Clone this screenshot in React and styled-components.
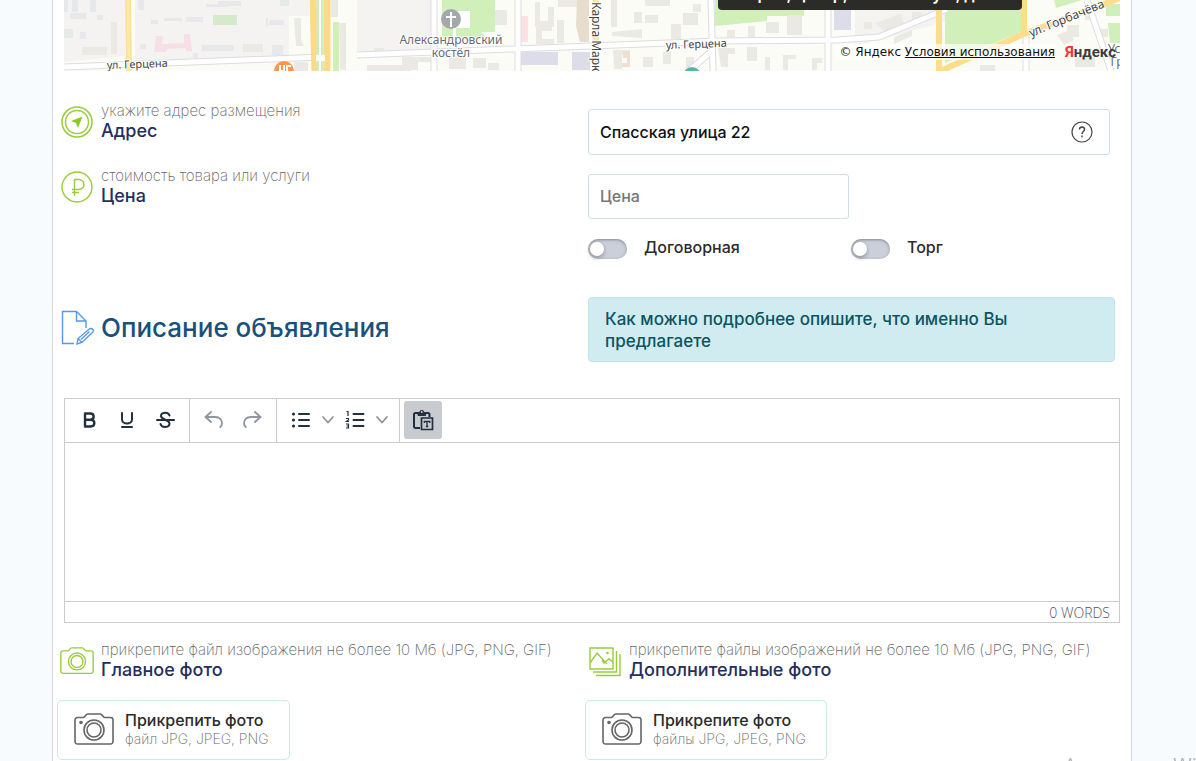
import React from 'react'
import { styled, createGlobalStyle } from "styled-components";

const GlobalStyle = createGlobalStyle`
  * {
    box-sizing: border-box;
  }
  body {
    margin: 0;
    min-height: 100vh;
    background: #f7fbfd;
    font-family: Inter, "Open Sans", sans-serif;
    color: #2b2b2b;
    overflow: hidden;
  }
`;

const Page = styled.div`
  display: flex;
  justify-content: center;
  padding: 0 64px 0 52px;
`;

const Panel = styled.main`
  width: 100%;
  max-width: 1080px;
  min-height: 100vh;
  padding: 0 11px;
  background: #fff;
  border-left: 1px solid #cfdfe5;
  border-right: 1px solid #cfdfe5;
`;

const MapBox = styled.div`
  position: relative;
  height: 71px;
  overflow: hidden;
  > svg {
    display: block;
    width: 100%;
    height: 100%;
  }
`;
const Balloon = styled.div`
  position: absolute;
  left: 654px;
  bottom: 61px;
  width: 304px;
  padding: 8px 0 6px;
  border-radius: 0 0 4px 4px;
  background: #2b2c27;
  color: #fff;
  font-size: 16px;
  font-weight: 600;
  line-height: 20px;
  text-align: center;
`;
const Copyright = styled.div`
  position: absolute;
  right: 64px;
  bottom: 11px;
  padding: 0 1px 0 4px;
  background: rgba(255, 255, 255, 0.7);
  color: #111;
  font-family: "DejaVu Sans", sans-serif;
  font-size: 12px;
  line-height: 16px;
  a {
    color: #111;
  }
`;
const YandexLogo = styled.a`
  position: absolute;
  right: 4px;
  bottom: 10px;
  color: #3c3c3c;
  font: bold 15px/18px Roboto, sans-serif;
  text-decoration: none;
  span {
    color: #f33;
  }
`;

const Row = styled.div`
  display: grid;
  grid-template-columns: 1fr 1fr;
  margin: ${({ $top }) => $top || 0}px 4px 0 -4px;
`;
const Caption = styled.div`
  display: flex;
  align-items: center;
  align-self: start;
  gap: 7px;
`;
const IconSlot = styled.span`
  display: flex;
  flex: none;
  justify-content: center;
  width: 34px;
`;
const Hint = styled.p`
  margin: 0;
  color: #666;
  font-size: ${({ $small }) => ($small ? 14 : 15)}px;
  font-weight: 200;
  line-height: 18px;
`;
const Label = styled.label`
  display: block;
  color: #252f5c;
  font-size: 18px;
  font-weight: 500;
  line-height: 22px;
`;

const Fields = styled.div`
  margin: 7px 6px 0 0;
`;
const Field = styled.div`
  display: flex;
  align-items: center;
  justify-content: space-between;
  width: ${({ $half }) => ($half ? "50%" : "100%")};
  height: ${({ $half }) => ($half ? 45 : 46)}px;
  padding: 0 16px 1px 11px;
  border: 1px solid #cfdfe5;
  border-radius: 3px;
`;
const TextInput = styled.input`
  flex: 1;
  min-width: 0;
  padding: 0;
  border: 0;
  outline: 0;
  background: none;
  color: #111;
  font: 500 16px/24px Inter, sans-serif;
  &::placeholder {
    color: #777;
    opacity: 1;
  }
`;
const IconButton = styled.button`
  display: flex;
  padding: 0;
  border: 0;
  background: none;
`;

const Switches = styled.div`
  display: grid;
  grid-template-columns: 1fr 1fr;
  column-gap: 4px;
  margin-top: 16px;
`;
const SwitchLabel = styled.label`
  display: flex;
  align-items: center;
  gap: 17px;
  font-size: 16px;
  font-weight: 500;
  line-height: 24px;
`;
const Switch = styled.input`
  appearance: none;
  width: 39px;
  height: 20px;
  margin: 4px 0 0;
  padding: 3px 2px;
  border-radius: 10px;
  background: #cacfd9;
  box-shadow: inset 0 1px 3px rgba(0, 0, 0, 0.35);
  &::before {
    content: "";
    display: block;
    width: 14px;
    height: 14px;
    border-radius: 50%;
    background: #fff;
    box-shadow: 0 2px 4px rgba(0, 0, 0, 0.3);
  }
  &:checked::before {
    margin-left: auto;
  }
`;

const SectionCaption = styled(Caption)`
  align-self: center;
  padding-bottom: 3px;
`;
const Title = styled.h2`
  margin: 0;
  color: #19507c;
  font-size: 26px;
  font-weight: 500;
  line-height: 36px;
`;
const Notice = styled.p`
  margin: 0 1px 0 0;
  padding: 10px 16px 9px;
  border: 1px solid #bee5eb;
  border-radius: 4px;
  background: #d1ecf1;
  color: #0c5460;
  font-size: 17px;
  font-weight: 500;
  line-height: 22px;
`;

const Editor = styled.section`
  margin-top: 36px;
  border: 1px solid #ccc;
`;
const Toolbar = styled.div`
  display: flex;
  height: 44px;
  border-bottom: 1px solid #ccc;
`;
const ToolGroup = styled.div`
  display: flex;
  align-items: center;
  gap: ${({ $gap = 4 }) => $gap}px;
  padding: 0 ${({ $last }) => ($last ? 4 : 7)}px 1px;
  border-right: ${({ $last }) => ($last ? 0 : "1px solid #ccc")};
`;
const ToolButton = styled.button`
  display: flex;
  align-items: center;
  justify-content: center;
  width: ${({ $narrow }) => ($narrow ? 20 : 34)}px;
  height: 38px;
  padding: 0;
  border: 0;
  border-radius: 3px;
  background: none;
  color: #222f3e;
  svg {
    flex: none;
  }
  &:disabled {
    color: #9197a0;
  }
`;
const PasteButton = styled(ToolButton)`
  width: 38px;
  background: #c8cbcf;
`;
const EditorText = styled.textarea`
  display: block;
  width: 100%;
  height: 158px;
  padding: 8px;
  border: 0;
  outline: 0;
  resize: none;
`;
const StatusBar = styled.div`
  height: 21px;
  padding: 1px 9px 0;
  border-top: 1px solid #ccc;
  color: #4d5661;
  font: 300 14px/20px "Open Sans", sans-serif;
  text-align: right;
`;

const UploadButton = styled.button`
  display: inline-flex;
  align-items: center;
  gap: 11px;
  height: 60px;
  margin: 19px 0 0 -3px;
  padding: 0 20px 2px 16px;
  border: 1px solid #c9ebe4;
  border-radius: 5px;
  background: #fff;
  color: #2b2b2b;
  font-family: inherit;
  text-align: left;
  strong {
    display: block;
    font-size: 16px;
    font-weight: 500;
    line-height: 20px;
  }
`;

const Watermark = styled.div`
  position: fixed;
  left: calc(100% - 132px);
  top: calc(100% - 10px);
  color: #b4b6b8;
  font: 20px/28px "Open Sans", sans-serif;
  white-space: nowrap;
`;

const CityMap = () => (
  <svg viewBox="64 0 1056 71" preserveAspectRatio="xMidYMax slice">
    <rect x="64" width="1056" height="71" fill="#fcfcf6" />
    <path d="M64 0h61v56l-61 6zM135 0h174v16h-20v40l-154 5zM357 0h76v50l-76 3zM855 0h90v22l-90 24z" fill="#f4f3f2" />
    <path d="M442 0h53v32h-14l6 6h-45zM715 0h89v16h-37v5l-52 5zM945 10h77v22l-77 31zM1054 0h28l-26 8zM1106 4h14v12h-14zM1108 23h12v20h-10z" fill="#d0efb9" />
    <path d="M453 11h17v17h-14v9h-3z" fill="#fff" />
    <path d="M213 15h24v10h-24z" fill="#d5e9cb" />
    <path d="M520 52h38v13h-38zM572 52h18v18h-18zM834 10h17v20h-17z" fill="#dddce9" />
    <path d="M156 36h7l-1 8 22-1v-9h6l2 17h-6l-1-3-18 1-1 3h-12z" fill="#f6dfe6" />
    <path d="M521 16h7v26h-7z" fill="#fbe0e4" />
    <path d="M64 0h4v12h-4zM72 0h6v12h-6zM90 0h6v12h-6zM70 13h16v6h-16zM97 15h6v5h-6zM64 29h9v9h-9zM80 32h6v7h-6zM138 0h6v10h-6zM151 20h7v4h-7zM164 18h18v3h-18zM186 17h17v5h-17zM206 4h22v3h-22zM218 1h23v5h-23zM280 0h9v6h-9zM266 18h2v8h-2zM269 20h15v5h-15zM140 44h6v5h-6zM202 45h32v6h-32zM272 45h11v10h-11zM193 53h5v5h-5z" fill="#e7e8eb" />
    <path d="M111 22h6v32h-6zM82 47h25v8H82zM243 44h20v8h-20zM294 18h7v22l3 6h-8zM331 0h7v17h-7zM339 23h7v47h-6zM294 62h14v9h-14zM367 65h44v6h-44zM374 48h10v3h-10zM64 64h22v6H64zM402 57h32v5h-16v8h-16zM449 56h17v13h-17zM473 58h13v10h-13zM488 63h11v7h-11zM495 10h12v15h-12zM535 2h5v19h8v-14h6v20h-19zM536 27h16v4h-10v8h12v5h-18zM557 20h7v23h-7zM558 0h20v7h-20zM611 0h6v27h-6zM612 32l30-3v9l-30-2zM634 12h8v11h-8zM645 15h13v8h-13zM671 24h10v15h-10zM683 13h15v12h-15zM693 4h8v8h-8zM645 0h25v6h-25zM613 50h17v5h-8v14h-8zM643 57h10v10h-10zM663 52h8v12h-8zM686 57h8v12h-8zM718 48h17v6h-7v13h-7zM747 47h10v14h-10zM765 57h5v13h-5zM727 30h8v7h-8zM748 26h7v12h-7zM766 22h13v11h-13zM787 15h15v20h-15zM793 39h17v4h-17zM783 55h13v4h-8v11h-5zM812 58h10v5h-5v7h-5zM864 22h8v7h-8zM875 23l26-9 3 10-18 9zM873 0h18v7h-18zM912 12h10v10h-10zM894 37l18-7v6l-18 8zM1057 35l12-5 5 10-10 5zM1067 25h12v12h-12zM1075 57h20v10h-20zM980 65h15v6h-15zM1085 12h8v8h-8zM1097 29h11v8h-11z" fill="#ebe9e4" />
    <path d="M577 0h12v42h-9l-4-16z" fill="#e6ddcf" />
    <path d="M623 51h7v16h-8v-4h5v-5h-4z" fill="#f0ded3" />
    <g fill="none">
      <path d="M64 67l258-10M357 55l362-14 118-1 42-3 68-28M434 0v71M518 0v71M711 0l2 71M828 0v71M1087 0l24 71M1026 33v38M713 50l-24 21" stroke="#dcdce3" strokeWidth="7" />
      <path d="M64 67l258-10M357 55l362-14 118-1 42-3 68-28M434 0v71M518 0v71M711 0l2 71M828 0v71M1087 0l24 71M1026 33v38M713 50l-24 21" stroke="#fff" strokeWidth="5" />
      <path d="M128 0l1 71M596 0v71" stroke="#fbdf9d" strokeWidth="6" />
      <path d="M128 0l1 71M596 0v71" stroke="#fdea9f" strokeWidth="3" />
      <path d="M313 0l2 71M327 0v71" stroke="#fdd98a" strokeWidth="7" />
      <path d="M320 0v71" stroke="#cdebbb" strokeWidth="7" />
      <path d="M320 0v71" stroke="#fff" strokeWidth="2" />
      <path d="M336 22v49" stroke="#d0f0b9" strokeWidth="6" />
      <path d="M316 58h9" stroke="#fff" strokeWidth="6" />
      <path d="M939 0v71M1024 0v32M940 71l84-37 96-36" stroke="#fddd8c" strokeWidth="6" />
    </g>
    <circle cx="451" cy="19" r="10" fill="#a6a7ad" />
    <path d="M451 12v15M446 17h10" stroke="#fff" strokeWidth="2" />
    <circle cx="284" cy="71" r="10" fill="#ff9650" />
    <path d="M280 65v6M284 65v6h-4M287 71v-5h4" fill="none" stroke="#fff" strokeWidth="2" />
    <circle cx="692" cy="76" r="9" fill="#52b6a4" />
    <g fontFamily="Noto Sans, sans-serif" fontSize="11" fill="#444" stroke="#fff" strokeWidth="2" paintOrder="stroke">
      <text transform="translate(107 69) rotate(-2)">ул. Герцена</text>
      <text transform="translate(666 49) rotate(-2)">ул. Герцена</text>
      <text transform="translate(592 2) rotate(90)" fontSize="12">Карла Маркса</text>
      <text transform="translate(1031 37) rotate(-22)" fontSize="12">ул. Горбачёва</text>
      <g fontSize="12" textAnchor="middle" fill="#666b78">
        <text x="451" y="44">Александровский</text>
        <text x="451" y="57">костёл</text>
        <text x="1114" y="53">Ус</text>
        <text x="1117" y="66">Гр</text>
      </g>
    </g>
  </svg>
);

const AddressIcon = () => (
  <svg width="32" height="32" viewBox="0 0 32 32" fill="none" stroke="#9acb3b">
    <circle cx="16" cy="16" r="15" strokeWidth="1.5" />
    <circle cx="16" cy="16" r="11.5" strokeWidth="1.4" />
    <path d="M21.500 10.500L17 22l-2-5-5-2z" fill="#8cc921" stroke="none" />
  </svg>
);
const PriceIcon = () => (
  <svg width="32" height="32" viewBox="0 0 32 32" fill="none" stroke="#9acb3b" strokeWidth="1.4">
    <circle cx="16" cy="16" r="15" />
    <path d="M13.500 25V8.500h4.500a4.700 4.700 0 0 1 0 10h-7M11 21.500h7" />
  </svg>
);
const DocumentIcon = () => (
  <svg width="33" height="36" viewBox="0 0 33 36" fill="none" stroke="#5796f0" strokeWidth="1.4">
    <path d="M13 33.500H1.500V1.500h14L25 11v7M15.500 1.500V11H25" />
    <path d="M16 34l1-5.500L28 19.300c1.300-1.200 3-.8 3.700 0 .8.900.6 2.200-.4 3.200L21 32.500zM17 28.500l4 4M20 29.500l8.500-8" />
  </svg>
);
const CameraIcon = ({ size, color, dot }) => (
  <svg width={size} height={size * 0.8} viewBox="0 0 40 32" fill="none" stroke={color} strokeWidth="1.6">
    <path d="M3.500 4.500h6c1.500 0 2-3.500 4.500-3.500h12c2.500 0 3 3.500 4.500 3.500h6A2.500 2.500 0 0 1 39 7v21.500a2.500 2.500 0 0 1-2.500 2.500h-33A2.500 2.500 0 0 1 1 28.500V7a2.500 2.500 0 0 1 2.500-2.500z" />
    <circle cx="20" cy="17" r="10" />
    <circle cx="20" cy="17" r="7" />
    {dot && <circle cx="7" cy="9.500" r="1.800" fill={color} stroke="none" />}
  </svg>
);
const GalleryIcon = () => (
  <svg width="32" height="32" viewBox="0 0 32 32" fill="none" stroke="#9acb3b" strokeWidth="1.4">
    <path d="M1 3h23v21H1zM1 18l7-10 10 11M13 15l2 3 5-4 4 3M27.500 6v21H4M31 9v21.500H7" />
    <circle cx="18.500" cy="8" r="1.300" fill="#9acb3b" stroke="none" />
  </svg>
);
const HelpIcon = () => (
  <svg width="22" height="22" viewBox="0 0 22 22" fill="none" stroke="#444" strokeWidth="1.2">
    <circle cx="11" cy="11" r="10" />
    <path d="M8.500 8.500c0-3.300 5-3.300 5 0 0 2-2.500 2-2.500 4.500M11 14.500v1.800" strokeWidth="1.5" />
  </svg>
);

const icons = {
  bold: <path d="M8 5.500h5.200c4.600 0 4.600 6.200 0 6.200H8zM8 11.700h5.700c4.800 0 4.800 6.800 0 6.800H8z" fill="none" stroke="currentColor" strokeWidth="2.400" strokeLinejoin="round" />,
  underline: <path d="M7 5v6.500c0 5.300 10 5.300 10 0V5M7 19h10" fill="none" stroke="currentColor" strokeWidth="2" strokeLinecap="round" />,
  strike: <g fill="none" stroke="currentColor" strokeWidth="2" strokeLinecap="round"><path d="M16.500 7.500C15.500 3.500 8 4 8 8c0 4 8.500 3.500 8.500 7.500 0 4.500-8 4.500-9 .5M4 12h17" /></g>,
  undo: <path d="M9 4L3.500 9 9 14M4 9h9.500c4 0 6.500 3 6.500 6 0 2-.8 3.300-1.800 4" fill="none" stroke="currentColor" strokeWidth="1.900" strokeLinecap="round" />,
  redo: <path d="M15 4l5.500 5-5.500 5M20 9h-9.500C6.500 9 4 12 4 15c0 2 .8 3.300 1.800 4" fill="none" stroke="currentColor" strokeWidth="1.900" strokeLinecap="round" />,
  bullets: <g><path d="M10 6h10M10 12h10M10 18h10" stroke="currentColor" strokeWidth="2" strokeLinecap="round" /><circle cx="4.500" cy="6" r="1.600" /><circle cx="4.500" cy="12" r="1.600" /><circle cx="4.500" cy="18" r="1.600" /></g>,
  numbers: <g fill="none" stroke="currentColor"><path d="M10.500 6h10M10.500 12h10M10.500 18h10" strokeWidth="2" strokeLinecap="round" /><path d="M3.500 3.500H5V8M3 10.500h2.500V12L3.500 13.500H6M3 16h2.500v4H3M3.500 18h2" strokeWidth="1.200" /></g>,
  chevron: <path d="M7 9l5 5.500L17 9" fill="none" stroke="#8b919a" strokeWidth="1.700" strokeLinecap="round" />,
  paste: <g fill="none" stroke="currentColor" strokeWidth="2"><path d="M9 20H4.500C3.700 20 3 19.300 3 18.500v-12C3 5.700 3.700 5 4.500 5H7M14.500 5H17c.8 0 1.500.7 1.500 1.500V9" /><path d="M7 4.500h1.700a2.100 2.100 0 0 1 4.200 0h1.600V7.500H7z" fill="currentColor" strokeWidth="1" /><circle cx="10.800" cy="4" r="1" fill="#c8cbcf" stroke="none" /><path d="M10.500 10h11v11.500h-11z" strokeWidth="1.700" /><path d="M13.300 15v-1.500h5.500V15M16 13.500v5M14.800 18.500h2.500" strokeWidth="1.300" /></g>,
};

const Tool = ({ icon, title, narrow, disabled, button: Button = ToolButton }) => (
  <Button type="button" title={title} aria-label={title} $narrow={narrow} disabled={disabled}>
    <svg width="24" height="24" viewBox="0 0 24 24" fill="currentColor">{icons[icon]}</svg>
  </Button>
);

const Upload = ({ id, title, text }) => (
  <UploadButton id={id} type="button">
    <CameraIcon size={40} color="#666" dot />
    <span>
      <strong>{title}</strong>
      <Hint as="span" $small>{text}</Hint>
    </span>
  </UploadButton>
);

const FieldCaption = ({ icon, hint, label, htmlFor }) => (
  <Caption>
    <IconSlot>{icon}</IconSlot>
    <div>
      <Hint>{hint}</Hint>
      <Label htmlFor={htmlFor}>{label}</Label>
    </div>
  </Caption>
);

export default function App() {
  return (
    <Page>
      <GlobalStyle />
      <Panel>
        <MapBox>
          <CityMap />
          <Balloon>Киров, центр, Спасская ул., д. 22</Balloon>
          <Copyright>© Яндекс <a href="#terms">Условия использования</a></Copyright>
          <YandexLogo href="#yandex"><span>Я</span>ндекс</YandexLogo>
        </MapBox>

        <Row $top={31}>
          <FieldCaption icon={<AddressIcon />} hint="укажите адрес размещения" label="Адрес" htmlFor="address" />
          <Fields>
            <Field>
              <TextInput id="address" defaultValue="Спасская улица 22" />
              <IconButton type="button" aria-label="?"><HelpIcon /></IconButton>
            </Field>
          </Fields>
        </Row>

        <Row $top={12}>
          <FieldCaption icon={<PriceIcon />} hint="стоимость товара или услуги" label="Цена" htmlFor="price" />
          <Fields>
            <Field $half>
              <TextInput id="price" placeholder="Цена" />
            </Field>
            <Switches>
              <SwitchLabel><Switch type="checkbox" />Договорная</SwitchLabel>
              <SwitchLabel><Switch type="checkbox" />Торг</SwitchLabel>
            </Switches>
          </Fields>
        </Row>

        <Row $top={38}>
          <SectionCaption>
            <IconSlot><DocumentIcon /></IconSlot>
            <Title>Описание объявления</Title>
          </SectionCaption>
          <Notice>Как можно подробнее опишите, что именно Вы предлагаете</Notice>
        </Row>

        <Editor>
          <Toolbar>
            <ToolGroup>
              <Tool icon="bold" title="Bold" />
              <Tool icon="underline" title="Underline" />
              <Tool icon="strike" title="Strikethrough" />
            </ToolGroup>
            <ToolGroup>
              <Tool icon="undo" title="Undo" disabled />
              <Tool icon="redo" title="Redo" disabled />
            </ToolGroup>
            <ToolGroup $gap={0}>
              <Tool icon="bullets" title="Bullet list" />
              <Tool icon="chevron" title="Bullet styles" narrow />
              <Tool icon="numbers" title="Numbered list" />
              <Tool icon="chevron" title="Number styles" narrow />
            </ToolGroup>
            <ToolGroup $last>
              <Tool icon="paste" title="Paste as text" button={PasteButton} />
            </ToolGroup>
          </Toolbar>
          <EditorText aria-label="Описание объявления" />
          <StatusBar>0 WORDS</StatusBar>
        </Editor>

        <Row $top={18}>
          <div>
            <FieldCaption
              icon={<CameraIcon size={34} color="#9acb3b" />}
              hint="прикрепите файл изображения не более 10 Мб (JPG, PNG, GIF)"
              label="Главное фото"
              htmlFor="main-photo"
            />
            <Upload id="main-photo" title="Прикрепить фото" text="файл JPG, JPEG, PNG" />
          </div>
          <div>
            <FieldCaption
              icon={<GalleryIcon />}
              hint="прикрепите файлы изображений не более 10 Мб (JPG, PNG, GIF)"
              label="Дополнительные фото"
              htmlFor="more-photos"
            />
            <Upload id="more-photos" title="Прикрепите фото" text="файлы JPG, JPEG, PNG" />
          </div>
        </Row>
      </Panel>
      <Watermark>Активация Windows</Watermark>
    </Page>
  );
}
